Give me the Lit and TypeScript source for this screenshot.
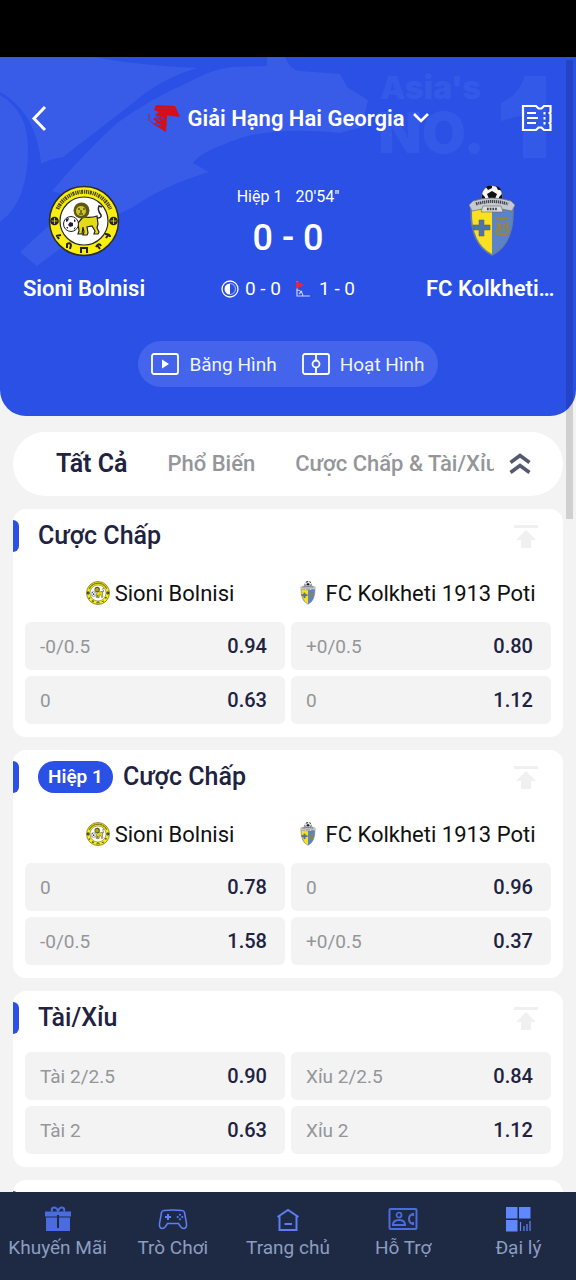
import { LitElement, html, svg, css, nothing } from "lit";
import { customElement, property } from "lit/decorators.js";

type Team = "home" | "away";
interface Odd { label: string; value: string }
interface Market { title: string; half?: string; teams: boolean; odds: Odd[] }

const TEAM_NAMES: Record<Team, string> = { home: "Sioni Bolnisi", away: "FC Kolkheti 1913 Poti" };

const MARKETS: Market[] = [
  {
    title: "Cược Chấp", teams: true,
    odds: [
      { label: "-0/0.5", value: "0.94" }, { label: "+0/0.5", value: "0.80" },
      { label: "0", value: "0.63" }, { label: "0", value: "1.12" },
    ],
  },
  {
    title: "Cược Chấp", half: "Hiệp 1", teams: true,
    odds: [
      { label: "0", value: "0.78" }, { label: "0", value: "0.96" },
      { label: "-0/0.5", value: "1.58" }, { label: "+0/0.5", value: "0.37" },
    ],
  },
  {
    title: "Tài/Xỉu", teams: false,
    odds: [
      { label: "Tài 2/2.5", value: "0.90" }, { label: "Xỉu 2/2.5", value: "0.84" },
      { label: "Tài 2", value: "0.63" }, { label: "Xỉu 2", value: "1.12" },
    ],
  },
];

const homeCrest = svg`
  <circle cx="36" cy="36" r="34.5" fill="#f8ee10" stroke="#2c2b2a" stroke-width="1.5"/>
  <circle cx="36" cy="36" r="24" fill="#fff" stroke="#2c2b2a" stroke-width="1.2"/>
  <path d="M9.500 24A29 29 0 0 1 62.500 24" fill="none" stroke="#4d4a14" stroke-width="4" stroke-dasharray="1.500 .8 1 .7 2 .9 1.200 .7"/>
  <g fill="#222"><circle cx="6.500" cy="36" r="4.300"/><circle cx="65.500" cy="36" r="4.300"/></g>
  <path d="M3.500 36h6M6.500 33v6M62.500 36h6M65.500 33v6" stroke="#d8cf18" stroke-width=".9"/>
  <g fill="none" stroke="#222" stroke-width="2">
    <path d="M8 51l5-1M11 54l-2-3M19 63v-4q3-2 4 1l-1 4M33 68v-5h6v5M49 60l3 4M48 62q3-5 5-1M57 49q5 0 5 3M58 53l3-4"/>
  </g>
  <path d="M35 32q9 1 14-1l1 8-1 4 2 4-1 2h-4l1-3-3-5-5 1 1 6-1 2h-4l1-3-1-5-1 7h-4l1-3-1-8z" fill="#e5da17" stroke="#222" stroke-width="1.200"/>
  <path d="M49 33q5 0 4-3-4-5-2-9l3 1" fill="none" stroke="#222" stroke-width="1.500"/>
  <circle cx="33.500" cy="25.500" r="8" fill="#5d5912"/>
  <circle cx="33" cy="26" r="5" fill="#cec52b"/>
  <path d="M30 24h2m3 0h2M31 29h4M33 25v3" stroke="#222" stroke-width="1"/>
  <circle cx="23" cy="39" r="7.500" fill="#fff" stroke="#222" stroke-width="1"/>
  <path d="M22 37l3 1 0 3-3 1-2-2zM18 34l3-1-1 3-2 1zM26 34l2 2-2 1zM18 42l2 0 0 2zM26 43l2-1-2 3z" fill="#1b1b33"/>`;

const awayCrest = svg`
  <circle cx="36" cy="11" r="10.500" fill="#f5f5f5" stroke="#444" stroke-width=".7"/>
  <path d="M36 6l5 3-2 5h-6l-2-5zM30 2q3-2 6-1l0 2-4 2zM40 1q4 1 5 4l-3 0zM26 9l3 3 0 5-3-2zM46 9l-3 3 0 5 3-2z" fill="#111"/>
  <path d="M15 24h42q1 35-21 46Q14 59 15 24z" fill="#5b83c9" stroke="#6b7d9c" stroke-width="1.500"/>
  <path d="M16 25h20v44Q15 58 16 25z" fill="#fbe022"/>
  <path d="M23 35h5v5h6v5h-6v6h-5v-6h-6v-5h6z" fill="#4b73b0" stroke="#6c6b3c" stroke-width=".6"/>
  <g fill="none" stroke="#9a8534" stroke-width="2"><path d="M40 34q4-3 6 1 3-4 6-1M41 37q3 4 0 8t5 5q7 0 6-5t-1-9M44 38v8M48 38v8M42 50q5-3 8 1"/></g>
  <path d="M17 16Q36 10 55 16l4 4-3 6q-20-5-40 0l-3-6z" fill="#c6c9cf" stroke="#757880" stroke-width=".8"/>
  <path d="M20 19q16-5 32 0" fill="none" stroke="#40434a" stroke-width="3" stroke-dasharray="1.500 .8 1 .7"/>
  <path d="M27 21h18l2 6H25z" fill="#d9dbe0" stroke="#666" stroke-width=".6"/>
  <path d="M31 24h10" stroke="#444" stroke-width="2.500" stroke-dasharray="1.700 1"/>`;

const topIcon = svg`<path d="M0 0h24v3H0zM12 5l10 10h-5v8H7v-8H2z" fill="currentColor"/>`;

@customElement("team-crest")
export class TeamCrest extends LitElement {
  @property() team: Team = "home";

  static styles = css`
    :host { display: block; flex: none; }
    svg { display: block; width: 100%; height: 100%; }
  `;

  render() {
    return html`<svg viewBox="0 0 72 72" aria-hidden="true">${this.team === "home" ? homeCrest : awayCrest}</svg>`;
  }
}

@customElement("market-card")
export class MarketCard extends LitElement {
  @property({ attribute: false }) market!: Market;

  static styles = css`
    :host { display: block; background: #fff; border-radius: 13px; padding-bottom: 13px; }
    .head { display: flex; align-items: center; height: 54px; margin-bottom: 7px; padding-right: 25px; }
    .mark { width: 6px; height: 32px; background: #2b50e6; border-radius: 0 6px 6px 0; margin-right: 19px; }
    .half { background: #2b50e6; color: #fff; font-size: 19px; font-weight: 600; line-height: 32px; padding: 0 10px; border-radius: 16px; margin-right: 10px; }
    h2 { margin: 0; flex: 1; font-size: 25px; font-weight: 500; line-height: 32px; color: #20223f; }
    .pin { border: 0; background: none; padding: 0; color: #f0f0f0; display: block; }
    .pin svg { display: block; width: 24px; height: 23px; }
    .teams { display: grid; grid-template-columns: 1fr 1fr; padding: 0 19px 6px; }
    .team { display: flex; align-items: center; justify-content: center; gap: 5px; height: 46px; font-size: 22px; color: #101010; white-space: nowrap; }
    .team team-crest { width: 24px; height: 24px; }
    .odds { display: grid; grid-template-columns: 1fr 1fr; gap: 6px; padding: 0 12px; }
    .odd { display: flex; align-items: center; justify-content: space-between; height: 48px; padding: 0 18px 0 15px; border: 0; border-radius: 6px; background: #f3f3f3; font: inherit; }
    .label { font-size: 19px; color: #949699; }
    .value { font-size: 20px; font-weight: 500; color: #20223f; }
  `;

  render() {
    const m = this.market;
    return html`
      <div class="head">
        <span class="mark"></span>
        ${m.half ? html`<span class="half">${m.half}</span>` : nothing}
        <h2>${m.title}</h2>
        <button class="pin" aria-label="Ghim"><svg viewBox="0 0 24 23">${topIcon}</svg></button>
      </div>
      ${m.teams ? html`<div class="teams">
        ${(["home", "away"] as Team[]).map((t) => html`<div class="team"><team-crest team=${t}></team-crest>${TEAM_NAMES[t]}</div>`)}
      </div>` : nothing}
      <div class="odds">
        ${m.odds.map((o) => html`<button class="odd"><span class="label">${o.label}</span><span class="value">${o.value}</span></button>`)}
      </div>`;
  }
}

const NAV = [
  { text: "Khuyến Mãi", color: "#4a6ce0", icon: svg`<path d="M2 5.500h26v5H2zM3 11.500h24V25H3z" fill="currentColor"/><path d="M9 5.500q-1-4 2-4t4 4q1-4 4-4t2 4" fill="none" stroke="currentColor" stroke-width="2"/><path d="M15 9v13" stroke="#1e2a44" stroke-width="2"/>` },
  { text: "Trò Chơi", color: "#5d80f2", icon: svg`<path d="M6 4.500q9-1 18 0 2 0 2.500 2l2 11q.5 5-3 5-1.500 0-3-2l-2-3h-11l-2 3q-1.500 2-3 2-3.500 0-3-5l2-11q.5-2 2.500-2z" fill="none" stroke="currentColor" stroke-width="1.500"/><path d="M10 8v6M7 11h6" stroke="currentColor" stroke-width="2"/><path d="M22 7.500l1.300 1.300L22 10l-1.300-1.200zM22 12l1.300 1.300-1.300 1.200-1.300-1.200zM19.700 9.700L21 11l-1.300 1.300-1.300-1.300zM24.300 9.700l1.300 1.300-1.300 1.300L23 11z" fill="currentColor"/>` },
  { text: "Trang chủ", color: "#5d7df5", icon: svg`<path d="M4.500 11L15 4l10.500 7M6.500 10V24h17V10M11.500 18h7.500" fill="none" stroke="currentColor" stroke-width="2"/>` },
  { text: "Hỗ Trợ", color: "#4a6ce0", icon: svg`<rect x="1.500" y="3" width="27" height="20" rx="1" fill="none" stroke="currentColor" stroke-width="2"/><circle cx="11" cy="9" r="2.500" fill="none" stroke="currentColor" stroke-width="1.700"/><path d="M5 19q0-5 6-5t6 5z" fill="none" stroke="currentColor" stroke-width="2"/><path d="M25 8q-4 1-4 5t4 5" fill="none" stroke="currentColor" stroke-width="2"/><path d="M25 7v3M25 16v3" stroke="currentColor" stroke-width="2"/>` },
  { text: "Đại lý", color: "#5f87ff", icon: svg`<path d="M3 1h11.500v11.500H3zM16 1h11.500v11.500H16zM3 14h11.500v11.500H3z" fill="currentColor"/><path d="M17.500 16v9M21 20v5M24 18v7M27 15v10" stroke="currentColor" stroke-width="1.200"/>` },
];

@customElement("app-root")
export class AppRoot extends LitElement {
  static styles = css`
    :host { display: flex; flex-direction: column; height: 100vh; overflow: hidden; background: #f3f3f3; font-family: Roboto, "Noto Sans", sans-serif; position: relative; }
    button { font: inherit; color: inherit; border: 0; background: none; padding: 0; }
    svg { display: block; flex: none; }
    .status { height: 57px; background: #000; flex: none; }
    .hero { position: relative; flex: none; background: #2b50e6; color: #fff; border-radius: 0 0 26px 26px; overflow: hidden; padding-bottom: 29px; }
    .art { position: absolute; inset: 0; width: 100%; height: 100%; }
    .art text { font-family: Inter, sans-serif; font-weight: 900; }
    .bar, .match, .media { position: relative; }
    .bar { display: flex; align-items: center; justify-content: space-between; height: 122px; padding: 0 24px; }
    .league { display: flex; align-items: center; font-size: 22px; font-weight: 600; }
    .league .flag { margin-right: 7px; }
    .league .down { margin-left: 8px; }
    .match { display: grid; grid-template-columns: 1fr 1fr 1fr; align-items: start; padding: 0 18px; }
    .side { display: flex; flex-direction: column; align-items: center; min-width: 0; padding-top: 6px; }
    .side:first-child { align-items: flex-start; }
    .side:last-child { align-items: flex-end; }
    .box { display: flex; flex-direction: column; align-items: center; width: 132px; }
    .box team-crest { width: 72px; height: 72px; }
    .name { max-width: 100%; margin-top: 16px; font-size: 22px; line-height: 32px; font-weight: 600; white-space: nowrap; overflow: hidden; text-overflow: ellipsis; }
    .centre { display: flex; flex-direction: column; align-items: center; white-space: nowrap; }
    .clock { display: flex; gap: 13px; font-size: 16px; line-height: 36px; }
    .score { font-size: 36px; line-height: 46px; font-weight: 500; }
    .minor { display: flex; align-items: center; margin-top: 12px; font-size: 19px; line-height: 32px; }
    .minor .half { margin-right: 6px; }
    .minor .corner { margin: 0 8px 0 14px; }
    .media { display: flex; width: fit-content; gap: 25px; margin: 36px auto 0; padding: 0 13px; border-radius: 23px; background: #4464eb; }
    .media button { display: flex; align-items: center; gap: 10px; height: 46px; font-size: 19px; color: #f1f4ff; }
    main { flex: 1; min-height: 0; overflow: hidden; display: flex; flex-direction: column; gap: 13px; padding: 16px 13px 0; }
    main > * { flex: none; }
    .tabs { display: flex; align-items: center; height: 64px; border-radius: 32px; background: #fff; padding: 0 32px 0 43px; }
    .scroll { flex: 1; min-width: 0; display: flex; align-items: center; gap: 40px; overflow: hidden; white-space: nowrap; font-size: 22px; line-height: 40px; font-weight: 500; color: #949699; }
    .scroll button { flex: none; }
    .scroll .on { font-size: 25px; color: #20223f; font-weight: 600; }
    .fold { margin-left: 15px; }
    nav { flex: none; display: grid; grid-template-columns: repeat(5, 1fr); height: 88px; background: #1e2a44; }
    nav a { display: flex; flex-direction: column; align-items: center; padding-top: 14px; gap: 4px; font-size: 19px; line-height: 24px; color: #8d9dc0; text-decoration: none; white-space: nowrap; }
    .thumb { position: absolute; right: 3px; top: 60px; width: 7px; height: 459px; background: rgba(0, 0, 0, 0.14); }
  `;

  private side(team: Team) {
    return html`<div class="side"><div class="box">
      <team-crest team=${team}></team-crest><div class="name">${TEAM_NAMES[team]}</div>
    </div></div>`;
  }

  render() {
    return html`
      <div class="status"></div>
      <header class="hero">
        <svg class="art" viewBox="0 0 576 359" preserveAspectRatio="xMidYMin slice" aria-hidden="true">
          <g fill="#385be8">
            <path d="M0 38Q28 54 28 92 28 145 0 165z"/>
            <path d="M0 0H95Q135 8 197 11 160 22 133 46L63 100Q50 102 41 107 37 56 0 35z"/>
            <path d="M267 0H285Q290 13 300 14L340 17 347 30 368 43 362 70 340 76Q265 68 225 87 200 96 193 106L209 115Q165 128 133 150 80 175 37 209L20 195 78 142 52 134Q85 95 117 66 150 42 187 26 215 11 233 10L267 9z"/>
          </g>
          <g fill="#3359e8"><text x="380" y="42" font-size="32">Asia's</text><text x="378" y="96" font-size="57">NO.</text><path d="M525 19h21v82h-23V58l-22 6V46q17-7 24-27z"/></g>
        </svg>
        <div class="bar">
          <button aria-label="Quay lại"><svg width="30" height="30" viewBox="0 0 30 30"><path d="M21 4L10 15.500 21 27" fill="none" stroke="#fff" stroke-width="3"/></svg></button>
          <button class="league">
            <svg class="flag" width="34" height="30" viewBox="0 0 34 30"><path d="M9 2l19 1 5 11-13-2v3l-1 14-13-8 4-2-4-3 4-2-2-2 4-3-5-2z" fill="#d90d14"/><path d="M8 12l4 2-2 2 3 2M14 14l3 2M9 21l5 1" stroke="#2b50e6" stroke-width="1.300" fill="none"/><path d="M2 11v7M4 18l2 3M10 5l17 1M20 12l8 1" stroke="#a52447" stroke-width="1"/></svg>
            Giải Hạng Hai Georgia
            <svg class="down" width="16" height="12" viewBox="0 0 16 12"><path d="M1 2l7 7 7-7" fill="none" stroke="#fff" stroke-width="2.600"/></svg>
          </button>
          <button aria-label="Phiếu cược"><svg width="31" height="28" viewBox="0 0 31 28"><path d="M2 2h13l2.500 2.500h3L23 2h6.500v6l-1 1 1 1v8l-1 1 1 1v6H23l-2.500-2.500h-3L15 26H2z" fill="none" stroke="#fff" stroke-width="2.200"/><path d="M6 9h9M6 14h11M6 19h9" stroke="#fff" stroke-width="2.200"/><path d="M23.500 8v13" stroke="#fff" stroke-width="2" stroke-dasharray="2.500 2.500"/></svg></button>
        </div>
        <div class="match">
          ${this.side("home")}
          <div class="centre">
            <div class="clock"><span>Hiệp 1</span><span>20'54"</span></div>
            <div class="score">0 - 0</div>
            <div class="minor">
              <svg class="half" width="18" height="18" viewBox="0 0 18 18"><circle cx="9" cy="9" r="8" fill="none" stroke="#fff" stroke-width="1.300"/><path d="M9 3.500a5.500 5.500 0 0 0 0 11z" fill="#fff"/><path d="M9 3.500a5.500 5.500 0 0 1 0 11" fill="none" stroke="#fff" stroke-width=".6"/></svg>
              <span>0 - 0</span>
              <svg class="corner" width="16" height="18" viewBox="0 0 16 18"><path d="M2 1v15h13M2 10q5 0 6 6M4 14l3-3" fill="none" stroke="#c9d2fb" stroke-width="1.200"/><path d="M1 1l8 4-8 4z" fill="#ea2440"/></svg>
              <span>1 - 0</span>
            </div>
          </div>
          ${this.side("away")}
        </div>
        <div class="media">
          <button><svg width="28" height="22" viewBox="0 0 28 22"><rect x="1" y="1" width="26" height="20" rx="2" fill="none" stroke="#fff" stroke-width="1.800"/><path d="M11 6.500l7 4.500-7 4.500z" fill="#fff"/></svg>Băng Hình</button>
          <button><svg width="28" height="22" viewBox="0 0 28 22"><rect x="1" y="1" width="26" height="20" rx="2" fill="none" stroke="#fff" stroke-width="1.800"/><circle cx="14" cy="11" r="3.500" fill="none" stroke="#fff" stroke-width="1.800"/><path d="M14 1v6.500M14 14.500V21" stroke="#fff" stroke-width="1.800"/></svg>Hoạt Hình</button>
        </div>
      </header>
      <main>
        <div class="tabs">
          <div class="scroll"><button class="on">Tất Cả</button><button>Phổ Biến</button><button>Cược Chấp &amp; Tài/Xỉu</button></div>
          <button class="fold" aria-label="Thu gọn"><svg width="22" height="22" viewBox="0 0 22 22"><path d="M1.500 9.500L11 2.500l9.500 7M1.500 19.500l9.500-7 9.500 7" fill="none" stroke="#555a70" stroke-width="3.600"/></svg></button>
        </div>
        ${MARKETS.map((m) => html`<market-card .market=${m}></market-card>`)}
        <market-card .market=${{ title: "", teams: false, odds: [] }}></market-card>
      </main>
      <nav>
        ${NAV.map((n) => html`<a href="#"><svg width="30" height="26" viewBox="0 0 30 26" color=${n.color}>${n.icon}</svg>${n.text}</a>`)}
      </nav>
      <div class="thumb"></div>`;
  }
}
